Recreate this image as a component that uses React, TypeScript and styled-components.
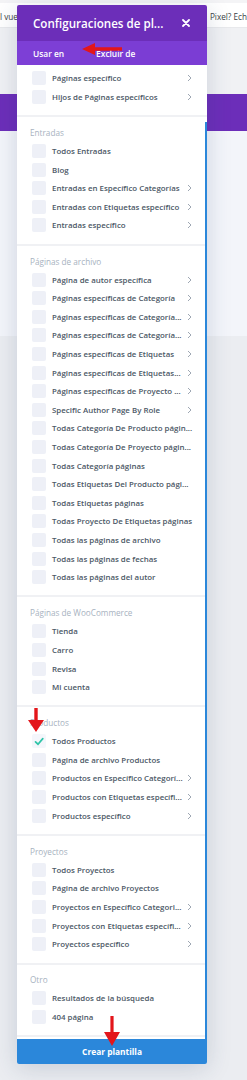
import React from 'react';
import styled, {createGlobalStyle} from 'styled-components';

const GlobalStyle = createGlobalStyle`
  html, body {
    margin: 0;
    padding: 0;
    background: #ebedf1;
  }
  body {
    font-family: 'Open Sans', 'Liberation Sans', sans-serif;
    width: 247px;
    height: 1080px;
    overflow: hidden;
  }
`;

type Item = {
    label: string;
    more?: boolean;
    checked?: boolean;
};

type Section = {
    title?: string;
    items: Item[];
};

const sections: Section[] = [
    {
        items: [
            {label: 'Páginas específico', more: true},
            {label: 'Hijos de Páginas específicos', more: true},
        ],
    },
    {
        title: 'Entradas',
        items: [
            {label: 'Todos Entradas'},
            {label: 'Blog'},
            {label: 'Entradas en Específico Categorías', more: true},
            {label: 'Entradas con Etiquetas específico', more: true},
            {label: 'Entradas específico', more: true},
        ],
    },
    {
        title: 'Páginas de archivo',
        items: [
            {label: 'Página de autor específica', more: true},
            {label: 'Páginas específicas de Categoría', more: true},
            {label: 'Páginas específicas de Categoría...', more: true},
            {label: 'Páginas específicas de Categoría...', more: true},
            {label: 'Páginas específicas de Etiquetas', more: true},
            {label: 'Páginas específicas de Etiquetas...', more: true},
            {label: 'Páginas específicas de Proyecto ...', more: true},
            {label: 'Specific Author Page By Role', more: true},
            {label: 'Todas Categoría De Producto págin...'},
            {label: 'Todas Categoría De Proyecto págin...'},
            {label: 'Todas Categoría páginas'},
            {label: 'Todas Etiquetas Del Producto pági...'},
            {label: 'Todas Etiquetas páginas'},
            {label: 'Todas Proyecto De Etiquetas páginas'},
            {label: 'Todas las páginas de archivo'},
            {label: 'Todas las páginas de fechas'},
            {label: 'Todas las páginas del autor'},
        ],
    },
    {
        title: 'Páginas de WooCommerce',
        items: [
            {label: 'Tienda'},
            {label: 'Carro'},
            {label: 'Revisa'},
            {label: 'Mi cuenta'},
        ],
    },
    {
        title: 'Productos',
        items: [
            {label: 'Todos Productos', checked: true},
            {label: 'Página de archivo Productos'},
            {label: 'Productos en Específico Categorí...', more: true},
            {label: 'Productos con Etiquetas específi...', more: true},
            {label: 'Productos específico', more: true},
        ],
    },
    {
        title: 'Proyectos',
        items: [
            {label: 'Todos Proyectos'},
            {label: 'Página de archivo Proyectos'},
            {label: 'Proyectos en Específico Categori...', more: true},
            {label: 'Proyectos con Etiquetas específi...', more: true},
            {label: 'Proyectos específico', more: true},
        ],
    },
    {
        title: 'Otro',
        items: [
            {label: 'Resultados de la búsqueda'},
            {label: '404 página'},
        ],
    },
];

const Page = styled.div`
  position: relative;
  width: 247px;
  height: 1080px;
  display: flex;
  flex-direction: column;
  background: #f1f2f5;
`;

const TopStrip = styled.div`
  height: 3px;
  background: #f4f4f6;
`;

const TextBar = styled.div`
  height: 25px;
  background: #ffffff;
  display: flex;
  align-items: center;
  justify-content: space-between;
  padding-top: 2px;
  box-sizing: border-box;
  font-size: 8.2px;
  color: #3a3f45;
  white-space: nowrap;
  overflow: hidden;
  border-bottom: 1px solid #e8e9ec;
`;

const BarText = styled.span`
  display: block;
`;

const GrayGap = styled.div`
  height: 66px;
  background: #f0f1f4;
`;

const PurpleBand = styled.div`
  height: 37px;
  background: #6c2eb9;
`;

const LightArea = styled.div`
  height: 205px;
  background: #f3f5fa;
`;

const LowerArea = styled.div`
  flex: 1;
  background: #ebedf1;
`;

const Modal = styled.div`
  position: absolute;
  left: 17px;
  top: 5px;
  width: 190px;
  height: 1059px;
  display: flex;
  flex-direction: column;
  background: #ffffff;
  box-shadow: 0 4px 24px rgba(40, 60, 100, 0.18);
  border-radius: 2px;
  overflow: hidden;
`;

const Header = styled.div`
  height: 36px;
  flex: none;
  display: flex;
  align-items: center;
  justify-content: space-between;
  padding: 0 17px 0 16px;
  background: #6c2eb9;
  color: #ffffff;
`;

const Title = styled.div`
  font-size: 11.6px;
  font-weight: 600;
`;

const Close = styled.svg`
  width: 8px;
  height: 8px;
  display: block;
`;

const Tabs = styled.div`
  height: 24px;
  flex: none;
  display: flex;
  background: #7b3dd4;
`;

const Tab = styled.div<{active?: boolean}>`
  display: flex;
  align-items: center;
  padding: 0 16px;
  font-size: 8.4px;
  font-weight: 600;
  color: #ffffff;
  background: ${(props) => (props.active ? '#7d3fd6' : 'transparent')};
`;

const Body = styled.div`
  position: relative;
  flex: 1;
  overflow: hidden;
  padding-top: 4px;
`;

const ScrollThumb = styled.div`
  position: absolute;
  right: 0;
  top: 57px;
  bottom: 0;
  width: 2px;
  background: #2b87da;
`;

const Group = styled.div`
  padding: 6px 0 9px;
  border-bottom: 2px solid #f0f1f4;

  &:first-of-type {
    padding-top: 0;
  }
`;

const GroupTitle = styled.div`
  height: 18.6px;
  display: flex;
  align-items: center;
  padding-left: 13px;
  font-size: 8.2px;
  color: #a7b2c0;
`;

const Row = styled.div`
  height: 18.6px;
  display: flex;
  align-items: center;
  padding: 0 15px 0 15px;
`;

const Box = styled.div<{checked?: boolean}>`
  width: 14px;
  height: 14px;
  flex: none;
  border-radius: 2px;
  background: ${(props) => (props.checked ? '#f4f6fb' : '#eef0f7')};
  display: flex;
  align-items: center;
  justify-content: center;
`;

const Label = styled.div`
  flex: 1;
  margin-left: 6px;
  font-size: 7.9px;
  font-weight: 600;
  color: #4c5866;
  white-space: nowrap;
`;

const Chevron = styled.svg`
  width: 5px;
  height: 8px;
  flex: none;
  margin-left: 2px;
`;

const CreateButton = styled.div`
  height: 25px;
  flex: none;
  display: flex;
  align-items: center;
  justify-content: center;
  background: #2b87da;
  color: #ffffff;
  font-size: 8.4px;
  font-weight: 700;
`;

const Arrow = styled.svg`
  position: absolute;
  display: block;
`;

const Check = () => (
    <svg width="10" height="9" viewBox="0 0 10 9">
        <path d="M1.5 4.8 L4 7.2 L8.8 1.6" fill="none" stroke="#2ec4a7" strokeWidth="1.7" strokeLinecap="round"/>
    </svg>
);

const App: React.FC = () => {
    return (
        <Page>
            <GlobalStyle/>
            <TopStrip/>
            <TextBar>
                <BarText>l vue</BarText>
                <BarText>Pixel? Ech</BarText>
            </TextBar>
            <GrayGap/>
            <PurpleBand/>
            <LightArea/>
            <LowerArea/>

            <Modal>
                <Header>
                    <Title>Configuraciones de pl...</Title>
                    <Close viewBox="0 0 8 8">
                        <path d="M1 1 L7 7 M7 1 L1 7" stroke="#ffffff" strokeWidth="1.8" strokeLinecap="round"/>
                    </Close>
                </Header>
                <Tabs>
                    <Tab active>Usar en</Tab>
                    <Tab>Excluir de</Tab>
                </Tabs>
                <Body>
                    {sections.map((section, index) => (
                        <Group key={index}>
                            {section.title && <GroupTitle>{section.title}</GroupTitle>}
                            {section.items.map((item, i) => (
                                <Row key={`${index}${i}`}>
                                    <Box checked={item.checked}>{item.checked && <Check/>}</Box>
                                    <Label>{item.label}</Label>
                                    {item.more && (
                                        <Chevron viewBox="0 0 5 8">
                                            <path d="M1 1 L4 4 L1 7" fill="none" stroke="#9ea7b3" strokeWidth="1"/>
                                        </Chevron>
                                    )}
                                </Row>
                            ))}
                        </Group>
                    ))}
                    <ScrollThumb/>
                </Body>
                <CreateButton>Crear plantilla</CreateButton>
            </Modal>

            <Arrow viewBox="0 0 40 12" width="40" height="12" style={{left: 82, top: 43}}>
                <path d="M0 6 L13 0 L13 4.3 L40 4.3 L40 7.7 L13 7.7 L13 12 Z" fill="#e3161b"/>
            </Arrow>
            <Arrow viewBox="0 0 16 24" width="16" height="24" style={{left: 28, top: 708}}>
                <path d="M6.3 0 L9.7 0 L9.7 12 L16 12 L8 24 L0 12 L6.3 12 Z" fill="#e3161b"/>
            </Arrow>
            <Arrow viewBox="0 0 16 30" width="16" height="30" style={{left: 104, top: 1016}}>
                <path d="M6.4 0 L9.6 0 L9.6 16 L16 16 L8 30 L0 16 L6.4 16 Z" fill="#e3161b"/>
            </Arrow>
        </Page>
    );
};

export default App;
